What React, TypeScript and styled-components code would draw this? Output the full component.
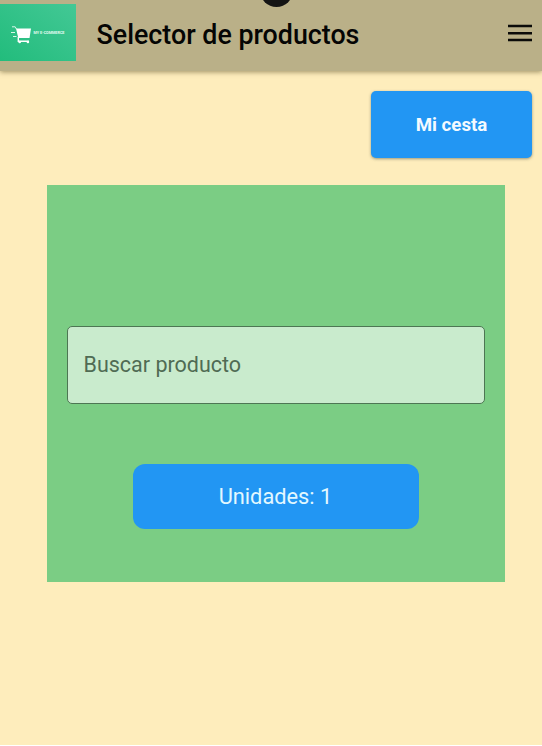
import React from "react";
import styled, { createGlobalStyle } from "styled-components";

const GlobalStyle = createGlobalStyle`
  * { box-sizing: border-box; }
  body { margin: 0; background: #fff; font-family: Roboto, sans-serif; overflow: hidden; }
`;

const Screen = styled.main`
  position: relative;
  display: flex;
  flex-direction: column;
  width: 542px;
  height: 745px;
  background: #feedbc;
  overflow: hidden;
`;

const AppBar = styled.header`
  display: flex;
  align-items: flex-start;
  height: 71px;
  flex: none;
  padding-top: 4px;
  background: #bab088;
  box-shadow: 0 1px 5px rgba(90, 80, 40, 0.6);
`;

const Logo = styled.svg`
  display: block;
  flex: none;
  width: 76px;
  height: 57px;
`;

const Title = styled.h1`
  flex: 1;
  margin: 2px 0 0 20.6px;
  color: #050504;
  font-size: 26.8px;
  font-weight: 500;
  line-height: 58px;
  white-space: nowrap;
`;

const MenuButton = styled.button`
  display: flex;
  margin: 20px 10px 0 0;
  padding: 0;
  border: 0;
  background: none;
`;

const CameraCutout = styled.div`
  position: absolute;
  top: -26px;
  left: 260px;
  width: 33px;
  height: 33px;
  border-radius: 50%;
  background: #141414;
`;

const Actions = styled.div`
  display: flex;
  justify-content: flex-end;
  padding: 20px 10px 0 0;
`;

const BasketButton = styled.button`
  width: 161px;
  height: 67px;
  padding: 1px 0 0;
  border: 0;
  border-radius: 5px;
  background: #2296f3;
  box-shadow: 0 1px 3px rgba(60, 70, 60, 0.5);
  color: #f4faff;
  font: 700 18.7px Roboto, sans-serif;
`;

const Panel = styled.section`
  display: flex;
  flex-direction: column;
  align-items: center;
  width: 458.6px;
  height: 397.5px;
  margin: 26.5px 0 0 46.7px;
  padding-top: 141px;
  background: #7bcd84;
`;

const SearchField = styled.input`
  width: 418px;
  height: 78px;
  padding: 0 15.5px 1px;
  border: 1.4px solid #4d7653;
  border-radius: 5px;
  outline: 0;
  background: #c9ebcd;
  font: 400 21.5px Roboto, sans-serif;
  &::placeholder { color: #506b54; opacity: 1; }
`;

const UnitsButton = styled.button`
  width: 286px;
  height: 65px;
  margin-top: 60.5px;
  padding: 0 1px 0 0;
  border: 0;
  border-radius: 12px;
  background: #2296f3;
  color: #e2f8ff;
  font: 400 21.8px Roboto, sans-serif;
`;

export default function App() {
  return (
    <>
      <GlobalStyle />
      <Screen>
        <AppBar>
          <Logo viewBox="0 0 76 57" role="img">
            <defs>
              <linearGradient id="logoFill" x1="0" y1="1" x2="1" y2="0">
                <stop offset="0" stopColor="#22bc7c" />
                <stop offset="1" stopColor="#43c895" />
              </linearGradient>
            </defs>
            <rect width="76" height="57" fill="url(#logoFill)" />
            <path d="M12 22.8h3.2l1.2 2.2M11 28.5h4M13 32.5h3.5" fill="none" stroke="#d8f7e8" strokeWidth="1" />
            <path d="M16 24.5H31L29.5 34H18.3Z" fill="#fff" />
            <path d="M18.3 33v4.2H29" fill="none" stroke="#fff" strokeWidth="1.4" />
            <circle cx="19.7" cy="38" r="1.3" fill="#fff" />
            <circle cx="27.9" cy="38" r="1.3" fill="#fff" />
            <text x="33.5" y="29.8" fill="#e2faef" fontFamily="Roboto" fontWeight="700" fontSize="3.8" textLength="31">
              MY E-COMMERCE
            </text>
          </Logo>
          <Title>Selector de productos</Title>
          <MenuButton aria-label="Menu">
            <svg width="24" height="18" viewBox="0 0 24 18">
              <path d="M0 2h24M0 9.2h24M0 16h24" stroke="#0b0b09" strokeWidth="2.6" />
            </svg>
          </MenuButton>
        </AppBar>
        <CameraCutout />
        <Actions>
          <BasketButton>Mi cesta</BasketButton>
        </Actions>
        <Panel>
          <SearchField placeholder="Buscar producto" />
          <UnitsButton>Unidades: 1</UnitsButton>
        </Panel>
      </Screen>
    </>
  );
}
